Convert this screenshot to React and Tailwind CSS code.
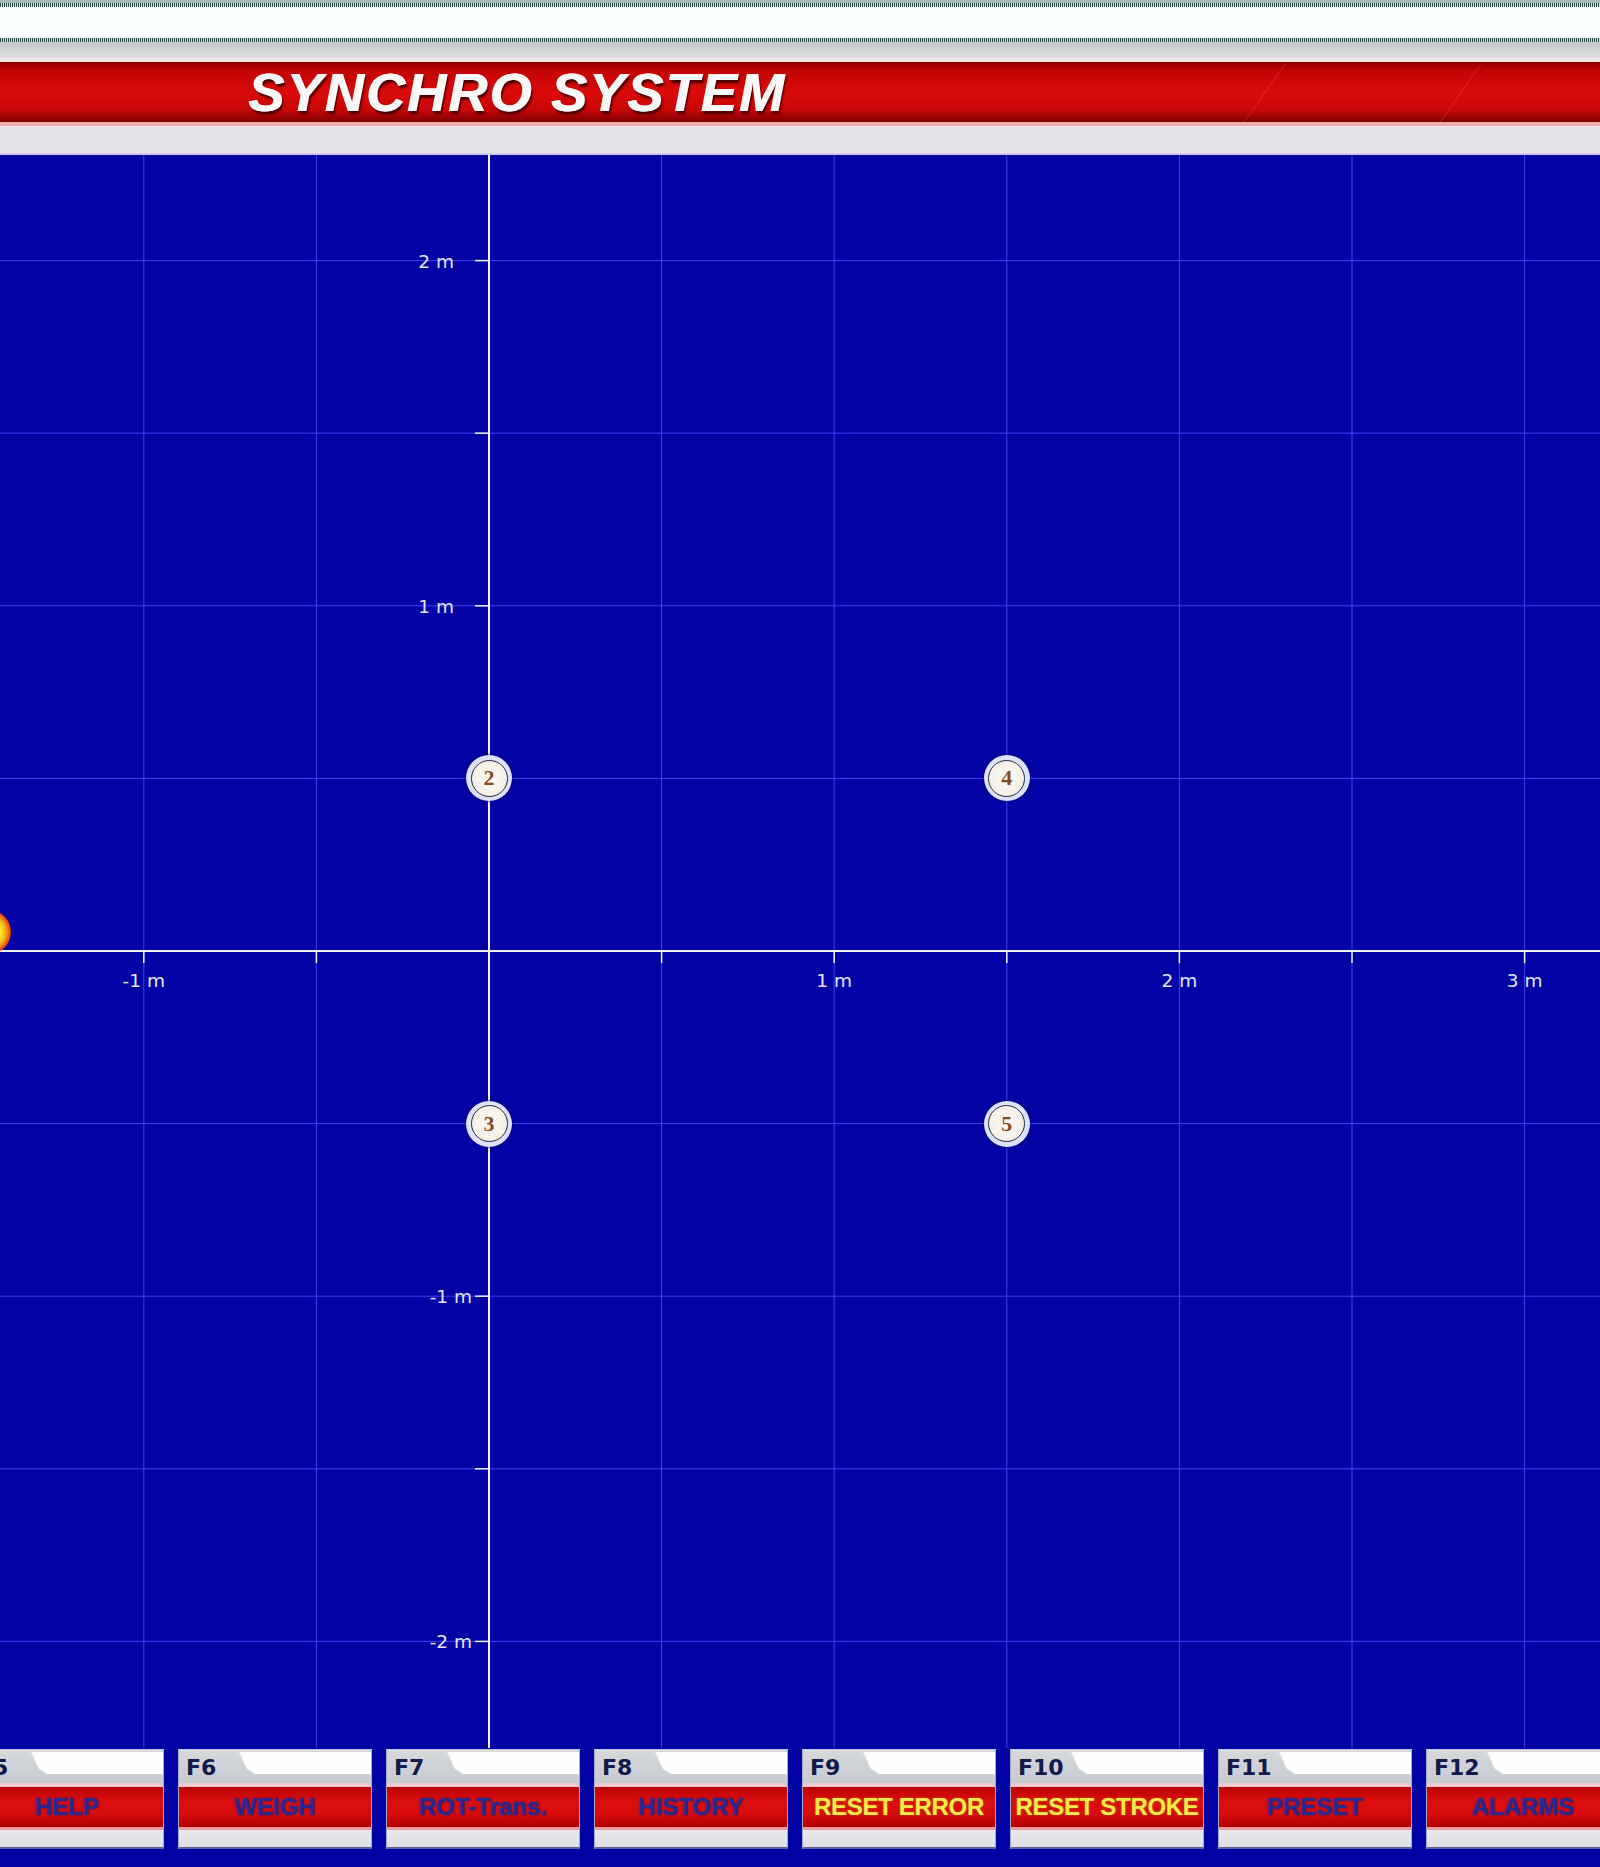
import React from "react";

const OX = 489;
const OY = 796;
const STEP = 172.6;

const buttons = [
  { key: "F5", label: "HELP" },
  { key: "F6", label: "WEIGH" },
  { key: "F7", label: "ROT-Trans." },
  { key: "F8", label: "HISTORY" },
  { key: "F9", label: "RESET ERROR", hot: true },
  { key: "F10", label: "RESET STROKE", hot: true },
  { key: "F11", label: "PRESET" },
  { key: "F12", label: "ALARMS" },
];

const markers = [
  { n: "2", x: OX, y: OY - STEP },
  { n: "4", x: OX + STEP * 3, y: OY - STEP },
  { n: "3", x: OX, y: OY + STEP },
  { n: "5", x: OX + STEP * 3, y: OY + STEP },
];

const dotted =
  "[background-image:repeating-linear-gradient(90deg,#264646_0px,#264646_1px,#cfe6e6_1px,#cfe6e6_2px)]";

function Header() {
  return (
    <div className="flex flex-col">
      <div className="h-[3px] bg-[#a9b6b6]" />
      <div className={`h-[4px] ${dotted}`} />
      <div className="h-[31px] bg-[#fbffff]" />
      <div className={`h-[4px] ${dotted}`} />
      <div className="h-[16px] bg-linear-to-b from-[#c3c8c8] to-[#dfe1e1]" />
      <div className="h-[4px] bg-[#f5e6e6]" />
      <div className="relative h-[60px] overflow-hidden bg-[linear-gradient(to_bottom,#8a0000_0%,#c20404_14%,#da0a0a_50%,#c80606_80%,#7c0000_100%)]">
        <div className="flex h-full items-center pl-[248px]">
          <span className="font-['Liberation_Sans',Arial,sans-serif] text-[54px] font-bold italic leading-none tracking-[2.2px] text-[#fbf8f8] [text-shadow:1px_0_0_#fff,2px_3px_2px_#4a0000]">
            SYNCHRO SYSTEM
          </span>
        </div>
        {/* faint glossy streaks on the bar */}
        <div className="absolute left-[1262px] top-[-6px] h-[80px] w-px rotate-[35deg] bg-[#f58080]/25" />
        <div className="absolute left-[1458px] top-[-6px] h-[80px] w-px rotate-[35deg] bg-[#f58080]/25" />
      </div>
      <div className="h-[4px] bg-[#f2a9a9]" />
      <div className="h-[27px] bg-[#e4e5e9]" />
      <div className="h-[2px] bg-[#cacaf2]" />
    </div>
  );
}

function Chart() {
  const vs = [-2, -1, 1, 2, 3, 4, 5, 6];
  const hs = [-4, -3, -2, -1, 1, 2, 3, 4];
  const xLabels = [
    { k: -2, t: "-1 m" },
    { k: 2, t: "1 m" },
    { k: 4, t: "2 m" },
    { k: 6, t: "3 m" },
  ];
  const yLabels = [
    { k: -4, t: "2 m", x: 454 },
    { k: -2, t: "1 m", x: 454 },
    { k: 2, t: "-1 m", x: 472 },
    { k: 4, t: "-2 m", x: 472 },
  ];
  return (
    <div className="relative h-[1593px] overflow-hidden">
      <svg width="1600" height="1593" className="block">
        {vs.map((k) => (
          <line key={"v" + k} x1={OX + k * STEP} x2={OX + k * STEP} y1="0" y2="1593" stroke="#4040f6" strokeWidth="1" />
        ))}
        {hs.map((k) => (
          <line key={"h" + k} x1="0" x2="1600" y1={OY + k * STEP} y2={OY + k * STEP} stroke="#4040f6" strokeWidth="1" />
        ))}
        <line x1="0" x2="1600" y1={OY} y2={OY} stroke="#f2f2ff" strokeWidth="2" />
        <line x1={OX} x2={OX} y1="0" y2="1593" stroke="#f2f2ff" strokeWidth="2" />
        {vs.map((k) => (
          <line key={"tx" + k} x1={OX + k * STEP} x2={OX + k * STEP} y1={OY} y2={OY + 12} stroke="#f2f2ff" strokeWidth="1.5" />
        ))}
        {hs.map((k) => (
          <line key={"ty" + k} x1={OX - 14} x2={OX} y1={OY + k * STEP} y2={OY + k * STEP} stroke="#f2f2ff" strokeWidth="1.5" />
        ))}
        <g fill="#e4e4f4" fontFamily="'DejaVu Sans', Verdana, sans-serif" fontSize="18.5">
          {xLabels.map((l) => (
            <text key={l.t} x={OX + l.k * STEP} y={OY + 36} textAnchor="middle">
              {l.t}
            </text>
          ))}
          {yLabels.map((l) => (
            <text key={l.t} x={l.x} y={OY + l.k * STEP + 7} textAnchor="end">
              {l.t}
            </text>
          ))}
        </g>
      </svg>

      <div className="absolute left-[-33px] top-[755px] h-[44px] w-[44px] rounded-full bg-[radial-gradient(circle,#fffb8a_0%,#ffe630_38%,#f5a412_55%,#e02a0c_72%,rgba(160,0,40,0.4)_88%,rgba(3,3,165,0)_100%)]" />

      {markers.map((m) => (
        <div
          key={m.n}
          className="absolute flex h-[46px] w-[46px] items-center justify-center rounded-full bg-[#dde1fb] shadow-[0_0_3px_#000060]"
          style={{ left: m.x - 23, top: m.y - 23 }}
        >
          <div className="flex h-[37px] w-[37px] items-center justify-center rounded-full border-[1.5px] border-[#2b2b3e] bg-[radial-gradient(circle,#fdfbf6_0%,#f3efe6_70%,#e6e1d6_100%)]">
            <span className="font-['Liberation_Serif',serif] text-[22px] font-bold leading-none text-[#8a4b1c]">
              {m.n}
            </span>
          </div>
        </div>
      ))}
    </div>
  );
}

function FKey({ k, label, hot }) {
  return (
    <div className="flex h-[100px] w-[194px] shrink-0 flex-col border-x border-t border-b-2 border-x-[#a3aacb] border-t-[#c3c9e2] border-b-[#5d6598] bg-[#dfe0e4]">
      <div className="relative h-[33px] bg-linear-to-b from-[#d7d9dc] to-[#c6cacf]">
        <div className="absolute inset-0 bg-[#fdfdfd] [clip-path:polygon(60px_2px,100%_2px,100%_24px,76px_24px,68px_19px)]" />
        <div className="relative pl-[7px] pt-[7px] font-['DejaVu_Sans',Verdana,sans-serif] text-[22px] font-bold leading-none text-[#121a4c]">
          {k}
        </div>
      </div>
      <div className="h-[4px] bg-[#efcaca]" />
      <div className="flex h-[40px] items-center justify-center overflow-hidden bg-[linear-gradient(to_bottom,#b80202_0%,#dc0e0e_35%,#d80c0c_65%,#b00202_100%)]">
        <span
          className={
            hot
              ? "whitespace-nowrap font-['Liberation_Sans',Arial,sans-serif] text-[24px] font-bold leading-none tracking-[-0.3px] text-[#f9e84a] [text-shadow:0_0_2px_#a08000]"
              : "whitespace-nowrap font-['Liberation_Sans',Arial,sans-serif] text-[24px] font-bold leading-none text-[#2a2790] [text-shadow:0_0_2px_#20206a]"
          }
        >
          {label}
        </span>
      </div>
      <div className="h-[3px] bg-[#f09a9a]" />
      <div className="flex-1 bg-linear-to-b from-[#e9e9ec] to-[#dcdde2]" />
    </div>
  );
}

export default function App() {
  return (
    <div className="flex h-[1867px] w-[1600px] flex-col overflow-hidden bg-[#0303a5]">
      <Header />
      <Chart />
      <div className="ml-[-30px] flex gap-[14px] pt-px">
        {buttons.map((b) => (
          <FKey key={b.key} k={b.key} label={b.label} hot={b.hot} />
        ))}
      </div>
    </div>
  );
}
